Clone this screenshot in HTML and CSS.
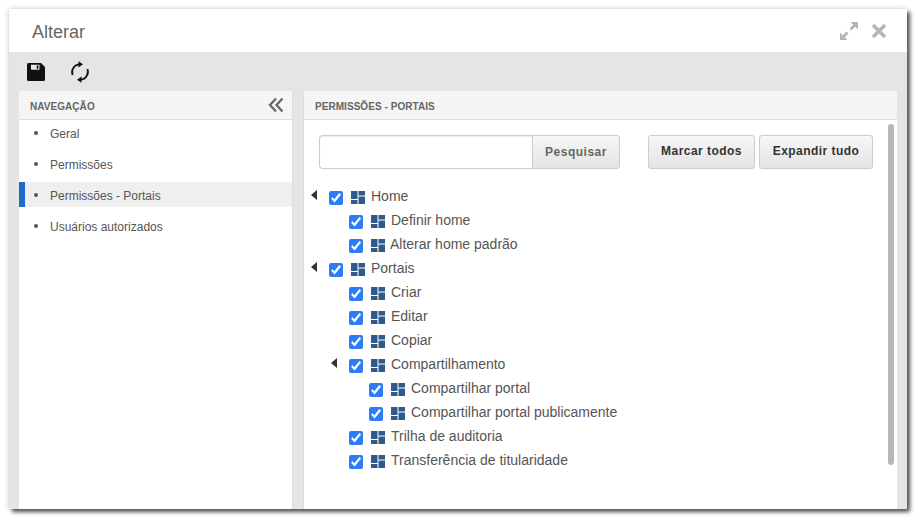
FILE: index.html
```html
<!DOCTYPE html>
<html lang="pt">
<head>
<meta charset="utf-8">
<title>Alterar</title>
<link rel="stylesheet" href="styles.css">
</head>
<body>
<svg class="defs" width="0" height="0" aria-hidden="true">
  <symbol id="portal" viewBox="0 0 14 13">
    <path d="M0 0h6.500v8H0zM0 9h6.500v4H0zM7.500 0H14v4.500H7.500zM7.500 5.500H14V13H7.500z" fill="#2d5a8a"/>
  </symbol>
</svg>
<div class="window">
  <header class="title-bar">
    <h1 class="title">Alterar</h1>
    <div class="window-actions">
      <svg class="icon-expand" viewBox="0 0 20 20" width="20" height="20"><path d="M11.500 1H19v7.500zM8.500 19H1v-7.500z" fill="#b5b5b5"/><path d="M15.500 4.500L11.500 8.500M4.500 15.500l4-4" stroke="#b5b5b5" stroke-width="2.800" fill="none"/></svg>
      <svg class="icon-close" viewBox="0 0 16 16" width="16" height="16"><path d="M2 2l12 12M14 2L2 14" stroke="#b5b5b5" stroke-width="3.400" fill="none"/></svg>
    </div>
  </header>
  <div class="toolbar">
    <svg viewBox="0 0 18 18" width="18" height="18"><path fill-rule="evenodd" d="M1.500 0H14l4 4v12.500a1.500 1.500 0 0 1-1.500 1.500h-15A1.500 1.500 0 0 1 0 16.500v-15A1.500 1.500 0 0 1 1.500 0zM4 1.800v4.400c0 .3.200.5.500.5h7.500c.3 0 .5-.2.500-.5V1.800zM9.700 2.500h1.700v3.300H9.700z" fill="#111"/></svg>
    <svg class="icon-refresh" viewBox="0 0 20 22" width="20" height="22"><path d="M2.600 14A8 8 0 0 1 9 3.300M17.400 8A8 8 0 0 1 11 18.700" fill="none" stroke="#111" stroke-width="1.800"/><path d="M8.500 0.300L13 3.300 8.500 6.500zM11.500 15.500L7 18.700l4.500 3z" fill="#111"/></svg>
  </div>
  <main class="content">
    <aside class="panel nav-panel">
      <div class="panel-head">
        <span>NAVEGAÇÃO</span>
        <svg class="icon-collapse" viewBox="0 0 16 16" width="16" height="16"><path d="M8 1.500L2 8l6 6.500M14.500 1.500L8.500 8l6 6.500" fill="none" stroke="#666" stroke-width="2.300"/></svg>
      </div>
      <ul class="nav-list">
        <li class="nav-item">Geral</li>
        <li class="nav-item">Permissões</li>
        <li class="nav-item is-active">Permissões - Portais</li>
        <li class="nav-item">Usuários autorizados</li>
      </ul>
    </aside>
    <section class="panel main-panel">
      <div class="panel-head"><span>PERMISSÕES - PORTAIS</span></div>
      <div class="main-body">
        <div class="controls">
          <div class="search">
            <input class="search-input" type="text" aria-label="Pesquisar">
            <button class="btn btn-search">Pesquisar</button>
          </div>
          <div class="actions">
            <button class="btn btn-action">Marcar todos</button>
            <button class="btn btn-action">Expandir tudo</button>
          </div>
        </div>
        <ul class="tree">
          <li class="row"><span class="caret"></span><input type="checkbox" checked><svg class="node"><use href="#portal"/></svg><span class="label">Home</span></li>
          <li class="row lvl1"><span class="caret none"></span><input type="checkbox" checked><svg class="node"><use href="#portal"/></svg><span class="label">Definir home</span></li>
          <li class="row lvl1"><span class="caret none"></span><input type="checkbox" checked><svg class="node"><use href="#portal"/></svg><span class="label tight">Alterar home padrão</span></li>
          <li class="row"><span class="caret"></span><input type="checkbox" checked><svg class="node"><use href="#portal"/></svg><span class="label">Portais</span></li>
          <li class="row lvl1"><span class="caret none"></span><input type="checkbox" checked><svg class="node"><use href="#portal"/></svg><span class="label">Criar</span></li>
          <li class="row lvl1"><span class="caret none"></span><input type="checkbox" checked><svg class="node"><use href="#portal"/></svg><span class="label">Editar</span></li>
          <li class="row lvl1"><span class="caret none"></span><input type="checkbox" checked><svg class="node"><use href="#portal"/></svg><span class="label">Copiar</span></li>
          <li class="row lvl1"><span class="caret"></span><input type="checkbox" checked><svg class="node"><use href="#portal"/></svg><span class="label">Compartilhamento</span></li>
          <li class="row lvl2"><span class="caret none"></span><input type="checkbox" checked><svg class="node"><use href="#portal"/></svg><span class="label">Compartilhar portal</span></li>
          <li class="row lvl2"><span class="caret none"></span><input type="checkbox" checked><svg class="node"><use href="#portal"/></svg><span class="label">Compartilhar portal publicamente</span></li>
          <li class="row lvl1"><span class="caret none"></span><input type="checkbox" checked><svg class="node"><use href="#portal"/></svg><span class="label">Trilha de auditoria</span></li>
          <li class="row lvl1"><span class="caret none"></span><input type="checkbox" checked><svg class="node"><use href="#portal"/></svg><span class="label">Transferência de titularidade</span></li>
        </ul>
        <div class="scroll-thumb"></div>
      </div>
    </section>
  </main>
</div>
</body>
</html>
```
FILE: styles.css
```css
* { box-sizing: border-box; }
html, body { margin: 0; height: 100%; }
body {
  background: #fff;
  padding: 9px 0 0 9px;
  font-family: "Liberation Sans", Arial, sans-serif;
  overflow: hidden;
}
.defs { position: absolute; }
.window {
  width: 898px;
  height: 500px;
  background: #e5e5e5;
  display: flex;
  flex-direction: column;
  box-shadow: 3px 3px 4px rgba(0,0,0,.65), 0 0 6px rgba(0,0,0,.2);
}
.title-bar {
  height: 43px;
  background: #fff;
  display: flex;
  align-items: center;
  justify-content: space-between;
  padding: 0 20px 0 23px;
}
.title {
  margin: 4px 0 0;
  font-size: 18px;
  font-weight: 400;
  color: #666;
}
.window-actions { display: flex; align-items: center; gap: 12px; }
.toolbar {
  height: 39px;
  display: flex;
  align-items: center;
  gap: 25px;
  padding: 0 0 0 18px;
}
.content {
  flex: 1;
  display: flex;
  gap: 10px;
  padding: 0 10px 0 10px;
  min-height: 0;
}
.panel {
  background: #fff;
  display: flex;
  flex-direction: column;
  border: 1px solid #dcdcdc;
  border-bottom: 0;
  border-radius: 2px 2px 0 0;
}
.nav-panel { width: 274px; border-top: 0; border-left: 0; }
.main-panel { width: 594px; border-top: 0; border-right: 0; }
.panel-head {
  height: 29px;
  flex: none;
  background: #f5f5f5;
  border-bottom: 1px solid #ddd;
  display: flex;
  align-items: center;
  justify-content: space-between;
  padding: 2px 8px 0 11px;
  font-size: 10px;
  font-weight: 700;
  color: #666;
  letter-spacing: .05px;
}
.icon-collapse { margin-top: -3px; }
.nav-list { list-style: none; margin: 0; padding: 0; }
.nav-item {
  height: 25px;
  margin-bottom: 6px;
  display: flex;
  align-items: center;
  padding: 2px 0 0 31px;
  font-size: 12px;
  color: #555;
  position: relative;
}
.nav-item::before {
  content: "";
  position: absolute;
  left: 15px;
  top: 11px;
  width: 4px;
  height: 4px;
  border-radius: 50%;
  background: #555;
}
.nav-item.is-active {
  background: #efefef;
  border-left: 6px solid #1e6bc8;
  padding-left: 25px;
}
.nav-item.is-active::before { left: 9px; }
.main-body {
  flex: 1;
  position: relative;
  padding: 15px 0 0 15px;
}
.controls { display: flex; width: 554px; justify-content: space-between; }
.search { display: flex; }
.search-input {
  width: 213px;
  height: 34px;
  border: 1px solid #ccc;
  border-right: 0;
  border-radius: 4px 0 0 4px;
  background: #fff;
  box-shadow: inset 0 1px 1px rgba(0,0,0,.08);
  outline: 0;
}
.btn {
  height: 34px;
  border: 1px solid #ccc;
  border-radius: 3px;
  background: linear-gradient(#f7f7f7, #e4e4e4);
  font-family: inherit;
  font-size: 12px;
  font-weight: 700;
  letter-spacing: .45px;
  padding: 0;
}
.btn-search { width: 88px; color: #666; border-radius: 0 3px 3px 0; letter-spacing: .5px; }
.actions { display: flex; gap: 4px; }
.btn-action { color: #333; padding-bottom: 3px; }
.btn-action:first-child { width: 107px; }
.btn-action:last-child { width: 114px; }
.tree { list-style: none; margin: 15px 0 0 -8px; padding: 0; }
.row {
  height: 24px;
  display: flex;
  align-items: center;
  font-size: 14px;
  color: #555;
}
.lvl1 { padding-left: 20px; }
.lvl2 { padding-left: 40px; }
.caret {
  width: 18px;
  height: 10px;
  flex: none;
  position: relative;
  align-self: center;
  margin-top: -2px;
}
.caret::before {
  content: "";
  position: absolute;
  left: 0;
  top: 0;
  border-style: solid;
  border-width: 5px 6px 5px 0;
  border-color: transparent #333 transparent transparent;
}
.caret.none::before { display: none; }
.row input {
  width: 14px;
  height: 14px;
  margin: 3px 8px 0 0;
  accent-color: #2b7cf6;
  flex: none;
}
.node { width: 14px; height: 13px; margin: 2px 6px 0 0; flex: none; }
.label { margin-bottom: 1px; }
.tight { margin-left: -1px; }
.scroll-thumb {
  position: absolute;
  right: 3px;
  top: 4px;
  width: 6px;
  height: 341px;
  border-radius: 3px;
  background: #b8b8b8;
}
```
